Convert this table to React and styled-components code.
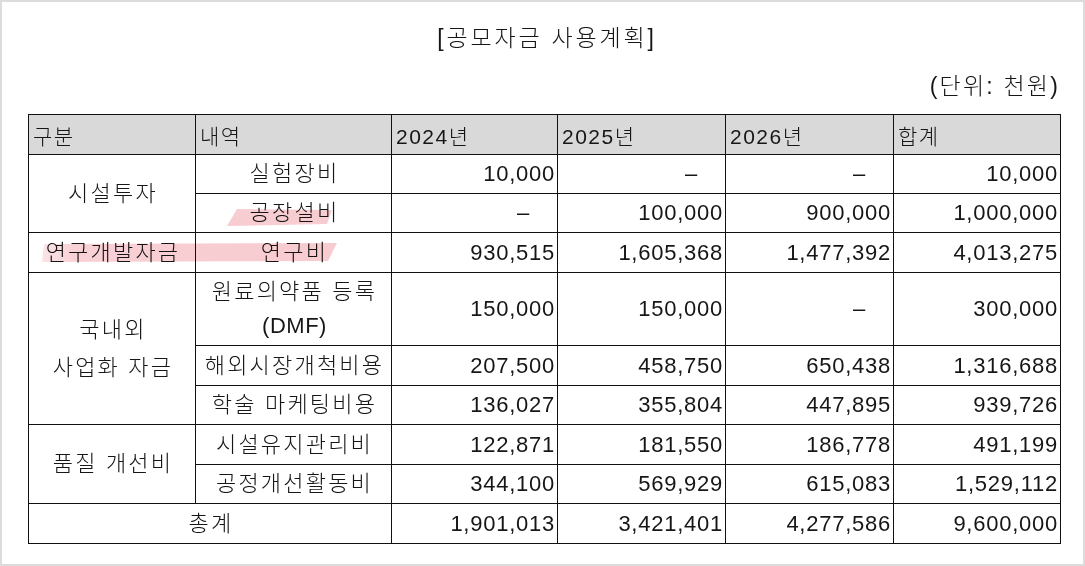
import React from "react";
import styled, { createGlobalStyle } from "styled-components";

const Global = createGlobalStyle`
  html, body { margin: 0; padding: 0; background: #fff; }
  body { font-family: "Liberation Sans", "Noto Sans CJK KR", sans-serif; color: #161616; }
`;

const Frame = styled.div`
  width: 1085px;
  height: 566px;
  box-sizing: border-box;
  border: 2px solid #dcdcdc;
  padding: 22px 23px 0 26px;
  display: flex;
  flex-direction: column;
`;

const Title = styled.div`
  height: 28px;
  line-height: 28px;
  text-align: center;
  font-size: 23px;
  letter-spacing: 2.8px;
  font-weight: 300;
  padding-left: 6px;
`;

const Unit = styled.div`
  margin-top: 20px;
  height: 28px;
  line-height: 28px;
  text-align: right;
  font-size: 23px;
  letter-spacing: 2.2px;
  font-weight: 300;
`;

const TableWrap = styled.div`
  position: relative;
  margin-top: 14px;
  width: 1032px;
`;

const Table = styled.table`
  border-collapse: collapse;
  table-layout: fixed;
  width: 1032px;
  & td, & th {
    border: 1px solid #111;
    padding: 0;
    vertical-align: middle;
    box-sizing: border-box;
  }
`;

const Head = styled.th`
  background: #d9d9d9;
  text-align: left;
  font-weight: 300;
  font-size: 21px;
  letter-spacing: 1.5px;
  padding-left: 4px !important;
  height: 40px;
`;

const Label = styled.td`
  text-align: center;
  font-size: 22px;
  letter-spacing: 2.2px;
  font-weight: 300;
  line-height: ${(p) => p.$lh || 28}px;
  height: ${(p) => p.$h || 39}px;
  padding-left: 2px !important;
`;

const Latin = styled.span`
  letter-spacing: 0.5px;
`;

const Num = styled.td`
  text-align: right;
  font-size: 22px;
  letter-spacing: 0.75px;
  padding-right: ${(p) => (p.$dash ? 27 : 2)}px !important;
  height: ${(p) => p.$h || 39}px;
`;

const Mark = styled.svg`
  position: absolute;
  pointer-events: none;
  mix-blend-mode: multiply;
  left: ${(p) => p.$x}px;
  top: ${(p) => p.$y}px;
`;

const cols = [167, 196, 166, 168, 168, 167];

const N = ({ v, h }) => (v === "-" ? <Num $dash $h={h}>–</Num> : <Num $h={h}>{v}</Num>);

export default function App() {
  return (
    <>
      <Global />
      <Frame>
        <Title>[공모자금 사용계획]</Title>
        <Unit>(단위: 천원)</Unit>
        <TableWrap>
          <Table>
            <colgroup>
              {cols.map((w, i) => (
                <col key={i} style={{ width: w }} />
              ))}
            </colgroup>
            <tbody>
              <tr>
                <Head>구분</Head>
                <Head>내역</Head>
                <Head>2024년</Head>
                <Head>2025년</Head>
                <Head>2026년</Head>
                <Head>합계</Head>
              </tr>
              <tr>
                <Label rowSpan={2}>시설투자</Label>
                <Label>실험장비</Label>
                <N v="10,000" />
                <N v="-" />
                <N v="-" />
                <N v="10,000" />
              </tr>
              <tr>
                <Label>공장설비</Label>
                <N v="-" />
                <N v="100,000" />
                <N v="900,000" />
                <N v="1,000,000" />
              </tr>
              <tr>
                <Label $h={40}>연구개발자금</Label>
                <Label $h={40}>연구비</Label>
                <N v="930,515" h={40} />
                <N v="1,605,368" h={40} />
                <N v="1,477,392" h={40} />
                <N v="4,013,275" h={40} />
              </tr>
              <tr>
                <Label rowSpan={3} $lh={38}>
                  국내외
                  <br />
                  사업화 자금
                </Label>
                <Label $h={73} $lh={34}>
                  원료의약품 등록
                  <br />
                  <Latin>(DMF)</Latin>
                </Label>
                <N v="150,000" h={73} />
                <N v="150,000" h={73} />
                <N v="-" h={73} />
                <N v="300,000" h={73} />
              </tr>
              <tr>
                <Label $h={40}>해외시장개척비용</Label>
                <N v="207,500" h={40} />
                <N v="458,750" h={40} />
                <N v="650,438" h={40} />
                <N v="1,316,688" h={40} />
              </tr>
              <tr>
                <Label>학술 마케팅비용</Label>
                <N v="136,027" />
                <N v="355,804" />
                <N v="447,895" />
                <N v="939,726" />
              </tr>
              <tr>
                <Label rowSpan={2}>품질 개선비</Label>
                <Label $h={40}>시설유지관리비</Label>
                <N v="122,871" h={40} />
                <N v="181,550" h={40} />
                <N v="186,778" h={40} />
                <N v="491,199" h={40} />
              </tr>
              <tr>
                <Label>공정개선활동비</Label>
                <N v="344,100" />
                <N v="569,929" />
                <N v="615,083" />
                <N v="1,529,112" />
              </tr>
              <tr>
                <Label colSpan={2} $h={40}>총계</Label>
                <N v="1,901,013" h={40} />
                <N v="3,421,401" h={40} />
                <N v="4,277,586" h={40} />
                <N v="9,600,000" h={40} />
              </tr>
            </tbody>
          </Table>
          <Mark $x={199} $y={94} width="106" height="19" viewBox="0 0 106 19">
            <polygon points="10,1 105,2 100,16 0,18" fill="#f8cdd2" />
          </Mark>
          <Mark $x={14} $y={128} width="296" height="21" viewBox="0 0 296 21">
            <defs>
              <linearGradient id="pk" x1="0" x2="1" y1="0" y2="0">
                <stop offset="0" stopColor="#fbe3e6" />
                <stop offset="0.12" stopColor="#f8d0d5" />
                <stop offset="1" stopColor="#f8cbd0" />
              </linearGradient>
            </defs>
            <polygon points="2,2 295,1 286,19 0,20" fill="url(#pk)" />
          </Mark>
        </TableWrap>
      </Frame>
    </>
  );
}
